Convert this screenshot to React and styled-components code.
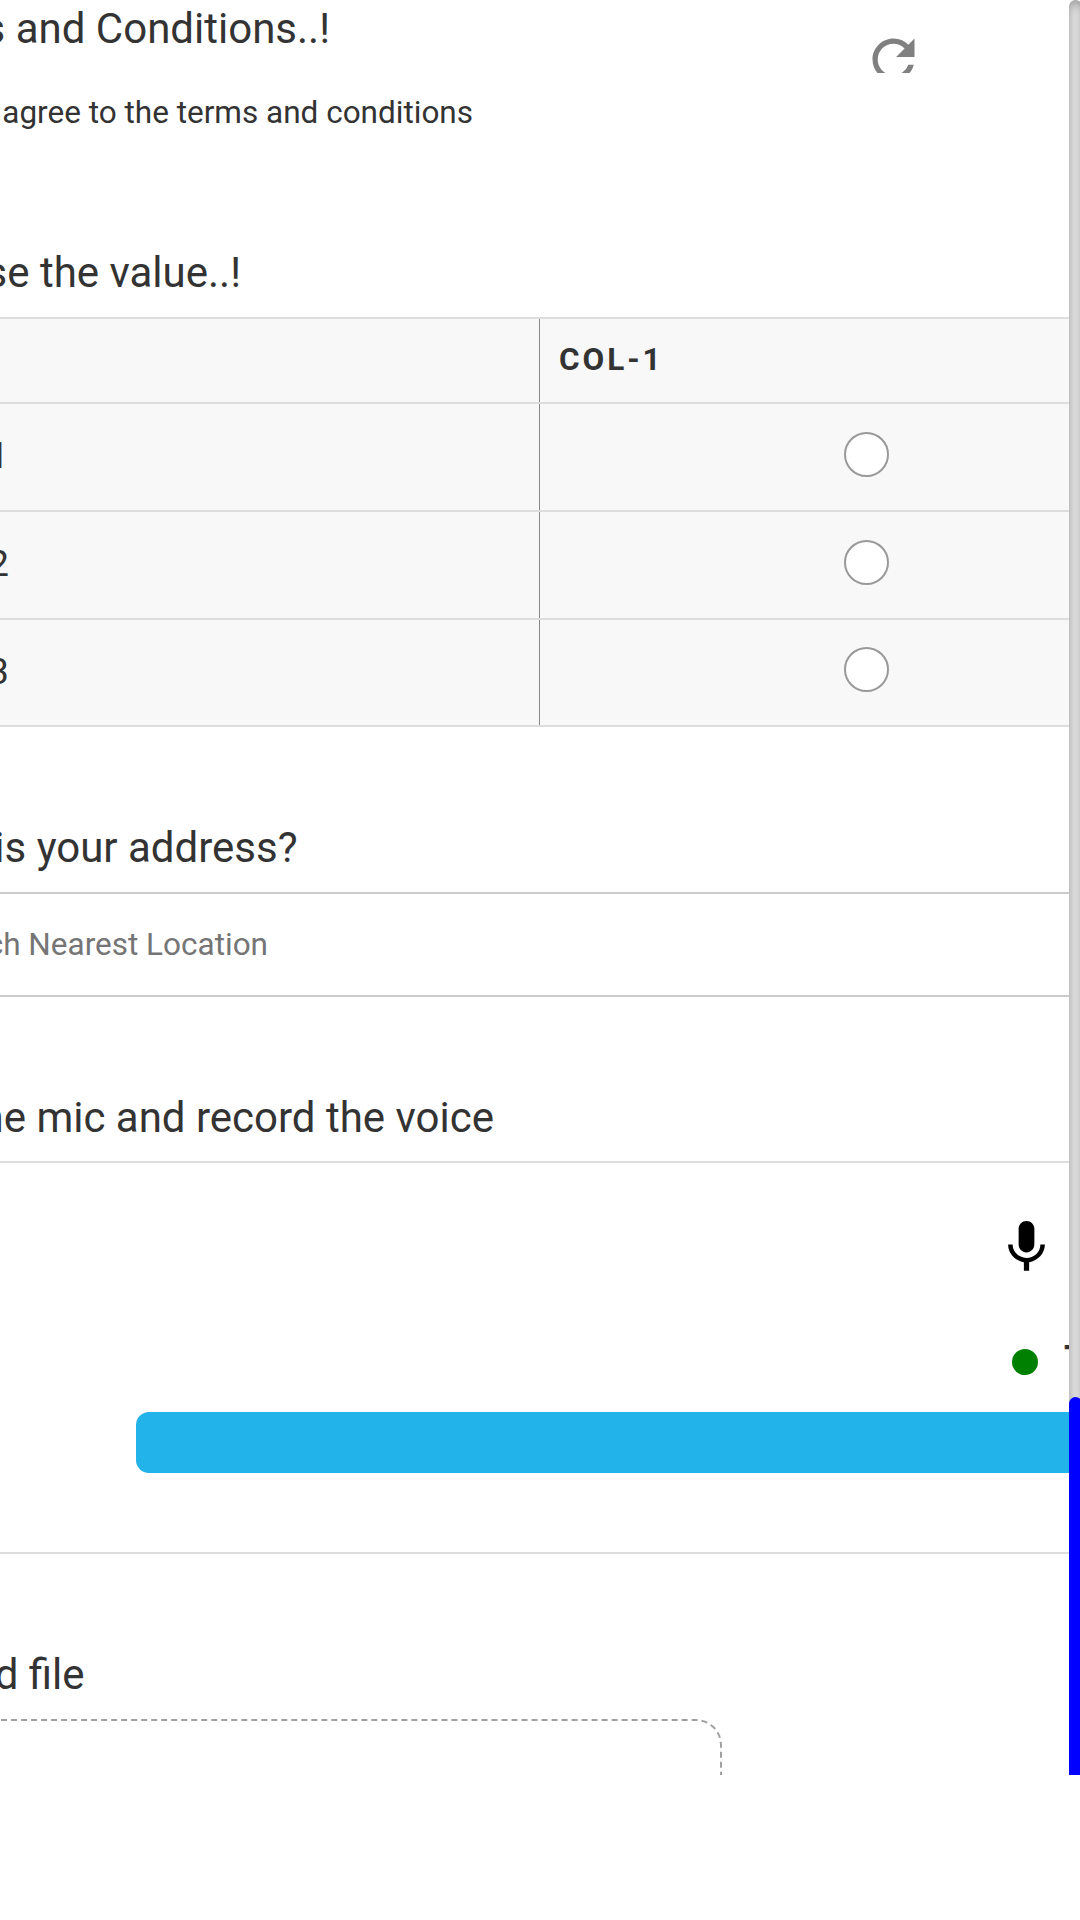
import React from 'react';
import styled, { createGlobalStyle } from 'styled-components';

const Global = createGlobalStyle`
  * { box-sizing: border-box; }
  body { margin: 0; background: #fff; overflow: hidden; }
`;

const Viewport = styled.div`
  display: flex;
  width: 1080px;
  height: 1775px;
  overflow: hidden;
  background: #fff;
  color: #333;
  font-family: Roboto, 'Liberation Sans', sans-serif;
`;

const Form = styled.main`
  position: relative;
  width: 1069px;
  height: 1775px;
  flex: none;
  overflow: hidden;
`;

const Track = styled.div`
  display: flex;
  flex-direction: column;
  justify-content: flex-end;
  width: 13px;
  height: 1800px;
  flex: none;
  border-radius: 6.5px;
  box-shadow: inset 0 0 13px grey;
`;

const Thumb = styled.div`
  height: 403px;
  border-radius: 6.5px;
  background: #00f;
`;

const ReloadClip = styled.div`
  position: absolute;
  top: 27.5px;
  left: 862.4px;
  width: 63px;
  height: 45.5px;
  overflow: hidden;
`;

const Icon = styled.svg`
  display: block;
  width: 63px;
  height: 63px;
  fill: ${(p) => p.$color};
`;

const Section = styled.section`
  height: ${(p) => p.$height}px;
`;

/* Lines run past the left edge, so they are anchored by where they end. */
const Line = styled.div`
  display: flex;
  justify-content: flex-end;
  width: ${(p) => p.$end}px;
  height: ${(p) => p.$height}px;
  padding-top: ${(p) => p.$top || 0}px;
  white-space: pre;
`;

const Heading = styled(Line)`
  font-size: 42px;
  line-height: 50px;
`;

const Small = styled(Line)`
  font-size: 31.5px;
  line-height: 38px;
`;

const Placeholder = styled(Small)`
  color: #757575;
`;

const Matrix = styled.div`
  border-top: 2px solid #ddd;
  background: #f8f8f8;
`;

const MatrixRow = styled.div`
  display: grid;
  grid-template-columns: 539px 1fr;
  height: ${(p) => p.$height}px;
  border-bottom: 2px solid #ddd;
`;

const RowLabel = styled.div`
  display: flex;
  justify-content: flex-end;
  width: 9px;
  padding-top: 30px;
  font-size: 36.75px;
  line-height: 44px;
`;

const Cell = styled.div`
  padding: ${(p) => p.$top}px 0 0 304px;
  border-left: 1px solid #888;
`;

const HeadCell = styled.div`
  padding: 22px 0 0 19px;
  border-left: 1px solid #888;
  font-size: 31.5px;
  line-height: 38px;
  font-weight: 700;
  letter-spacing: 2.95px;
`;

const Radio = styled.div`
  width: 45px;
  height: 45px;
  border: 2px solid #999;
  border-radius: 50%;
  background: #fff;
`;

const Field = styled.div`
  height: 105px;
  border-top: 2px solid #ccc;
  border-bottom: 2px solid #ccc;
`;

const Recorder = styled.div`
  height: 393px;
  padding-top: 50px;
  border-top: 2px solid #ddd;
  border-bottom: 2px solid #ddd;
`;

const MicRow = styled.div`
  height: 123px;
  padding-left: 995px;
`;

const StatusRow = styled.div`
  display: flex;
  gap: 26px;
  height: 76px;
  padding-left: 1012px;
`;

const Dot = styled.div`
  width: 26px;
  height: 26px;
  margin-top: 13px;
  flex: none;
  border-radius: 50%;
  background: #008000;
`;

const Status = styled.div`
  font-size: 36.75px;
  line-height: 46px;
  font-weight: 700;
`;

const Bar = styled.div`
  height: 61px;
  margin-left: 136px;
  border-radius: 13px 0 0 13px;
  background: #21b3e9;
`;

const DropZone = styled.div`
  width: 787px;
  height: 300px;
  margin-left: -65px;
  border: 2px dashed #a0a0a0;
  border-radius: 26px;
`;

const rows = [
  { label: '1', height: 108, top: 28 },
  { label: '2', height: 108, top: 28 },
  { label: '3', height: 107, top: 27 },
];

export default function App() {
  return (
    <>
      <Global />
      <Viewport>
        <Form>
          <ReloadClip>
            <Icon viewBox="0 0 24 24" $color="#808080">
              <path d="M17.65 6.35A7.958 7.958 0 0 0 12 4c-4.42 0-7.99 3.58-7.99 8s3.57 8 7.99 8c3.73 0 6.84-2.55 7.73-6h-2.08A5.99 5.99 0 0 1 12 18c-3.31 0-6-2.69-6-6s2.69-6 6-6c1.66 0 3.14.69 4.22 1.78L13 11h7V4l-2.35 2.35z" />
            </Icon>
          </ReloadClip>

          <Section $height={248}>
            <Heading $end={330} $height={94} $top={4}>s and Conditions..!</Heading>
            <Small $end={473} $height={38}>agree to the terms and conditions</Small>
          </Section>

          <Section $height={575}>
            <Heading $end={241} $height={69}>se the value..!</Heading>
            <Matrix>
              <MatrixRow $height={85}>
                <div />
                <HeadCell>COL-1</HeadCell>
              </MatrixRow>
              {rows.map((r) => (
                <MatrixRow key={r.label} $height={r.height}>
                  <RowLabel>{r.label}</RowLabel>
                  <Cell $top={r.top}><Radio /></Cell>
                </MatrixRow>
              ))}
            </Matrix>
          </Section>

          <Section $height={270}>
            <Heading $end={297.5} $height={69}>is your address?</Heading>
            <Field>
              <Placeholder $end={268} $height={100} $top={32}>ch Nearest Location</Placeholder>
            </Field>
          </Section>

          <Section $height={557}>
            <Heading $end={494} $height={68}>he mic and record the voice</Heading>
            <Recorder>
              <MicRow>
                <Icon viewBox="0 0 24 24" $color="#000">
                  <path d="M12 15c1.66 0 2.99-1.34 2.99-3L15 6c0-1.66-1.34-3-3-3S9 4.34 9 6v6c0 1.66 1.34 3 3 3zm5.3-3c0 3-2.54 5.1-5.3 5.1S6.7 15 6.7 12H5c0 3.42 2.72 6.23 6 6.72V22h2v-3.28c3.28-.48 6-3.3 6-6.72h-1.7z" />
                </Icon>
              </MicRow>
              <StatusRow>
                <Dot />
                <Status>T</Status>
              </StatusRow>
              <Bar />
            </Recorder>
          </Section>

          <Section $height={369}>
            <Heading $end={84.5} $height={69}>d file</Heading>
            <DropZone />
          </Section>
        </Form>
        <Track>
          <Thumb />
        </Track>
      </Viewport>
    </>
  );
}
